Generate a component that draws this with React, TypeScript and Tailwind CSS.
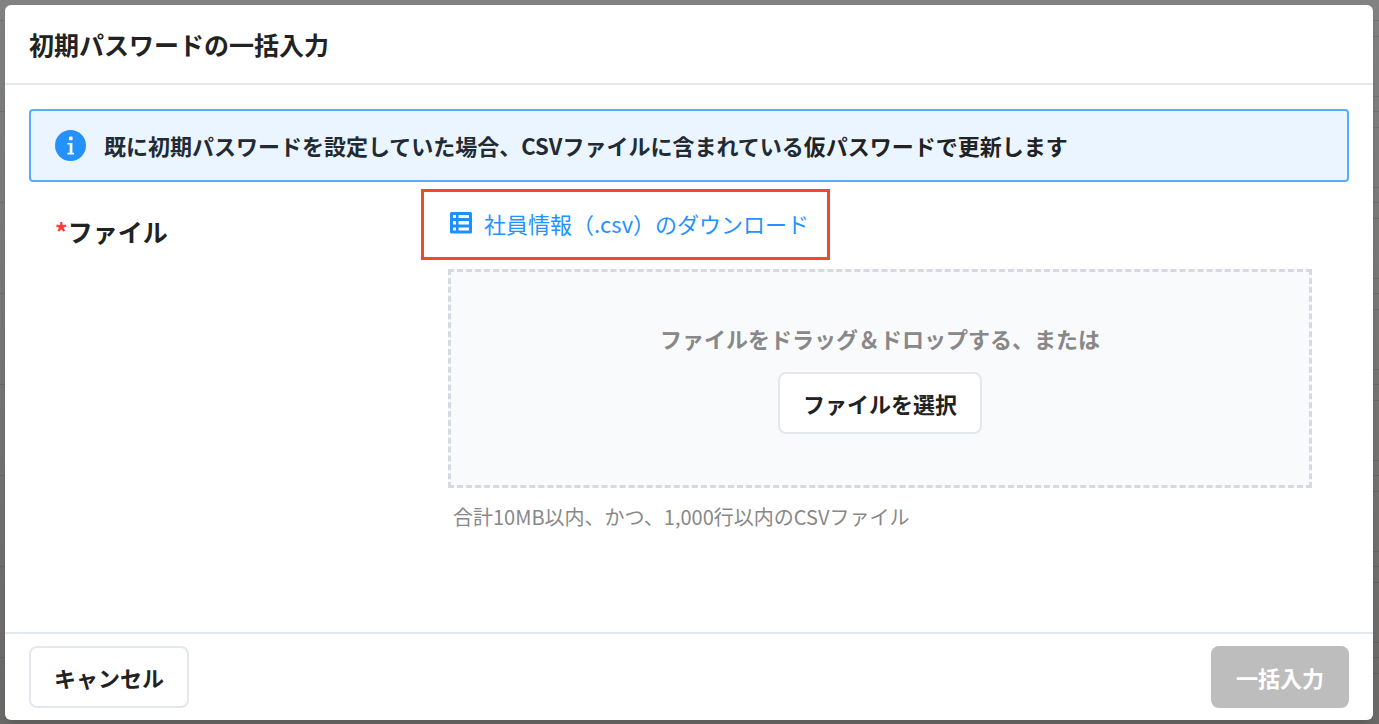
import React, { useRef } from 'react';

const listRows = [0, 1, 2, 3, 4, 5, 6, 7];

const InfoIcon = () => (
  <svg viewBox="0 0 31 31" className="h-[31px] w-[31px] shrink-0" aria-hidden="true">
    <circle cx="15.5" cy="15.5" r="15.5" fill="#2491ff" />
    <rect x="14" y="6.6" width="3.6" height="3.6" rx="0.8" fill="#fff" />
    <path d="M12.4 12.9H17.4V22.8H19V24.5H12.4V22.8H14.7V14.6H12.4Z" fill="#fff" />
  </svg>
);

const TableIcon = () => (
  <svg viewBox="0 0 22 22" className="h-[22px] w-[22px] shrink-0" aria-hidden="true">
    <path
      fillRule="evenodd"
      fill="#1f8fff"
      d="M1.5 0H20.5A1.5 1.5 0 0 1 22 1.5V20A1.5 1.5 0 0 1 20.5 21.5H1.5A1.5 1.5 0 0 1 0 20V1.5A1.5 1.5 0 0 1 1.5 0ZM3 3V6H6V3ZM8.5 3V6H19V3ZM3 9V12.5H6V9ZM8.5 9V12.5H19V9ZM3 15.5V18.5H6V15.5ZM8.5 15.5V18.5H19V15.5Z"
    />
  </svg>
);

const App = () => {
  const fileInput = useRef<HTMLInputElement>(null);

  return (
    <div className="relative flex min-h-screen bg-linear-to-b from-[#828282] to-[#6c6a69] pt-[5px] pr-[6px] pb-1 pl-[5px] font-['Noto_Sans_CJK_JP',sans-serif] text-[22px] leading-8 text-[#222]">
      {/* Dimmed list behind the dialog */}
      <div className="absolute inset-0 overflow-hidden pt-5" aria-hidden="true">
        {listRows.map(row => (
          <div key={row} className="flex h-[91px] justify-end border-t border-black/10">
            <div className="mt-[15px] h-[61px] w-8 border-y border-black/10" />
          </div>
        ))}
      </div>

      <div
        role="dialog"
        aria-labelledby="dialog-title"
        className="relative flex flex-1 flex-col rounded-md bg-white shadow-lg"
      >
        <header className="border-b-2 border-[#e3e8ed] px-6 pt-[23px] pb-[23px]">
          <h1 id="dialog-title" className="text-[25px] leading-8 font-bold">
            初期パスワードの一括入力
          </h1>
        </header>

        <main className="flex-1 px-6 pt-6">
          <div className="flex items-center gap-[18px] rounded border-2 border-[#58acff] bg-[#eaf5ff] px-6 pt-[18px] pb-[19px] font-bold text-[#222b33]">
            <InfoIcon />
            <p>
              既に初期パスワードを設定していた場合、CSVファイルに含まれている
              <span className="text-[#222]">仮パスワードで更新します</span>
            </p>
          </div>

          <div className="flex pt-[7px] pr-[37px] pl-[26px]">
            <label htmlFor="file" className="w-[366px] shrink-0 pt-[26px] text-[25px] font-bold">
              <span className="text-[#ff3b3b]">*</span>ファイル
            </label>

            <div className="flex-1">
              <a
                href="#download"
                className="flex w-fit items-center gap-3 border-[3px] border-[#f04a2a] pt-[15px] pr-[18px] pb-[18px] pl-[26px] text-[#2491ff]"
              >
                <TableIcon />
                社員情報（.csv）のダウンロード
              </a>

              <div className="mt-[9px] ml-[27px] flex flex-col items-center border-[3px] border-dashed border-[#d3dae1] bg-[#f9fafc] pt-[50px] pb-[51px]">
                <p className="font-bold text-[#888]">ファイルをドラッグ＆ドロップする、または</p>
                <input ref={fileInput} id="file" type="file" accept=".csv" className="hidden" />
                <button
                  type="button"
                  onClick={() => fileInput.current?.click()}
                  className="mt-[18px] rounded-lg border-2 border-[#e3e8ed] bg-white px-[23px] py-[13px] font-bold"
                >
                  ファイルを選択
                </button>
              </div>
              <p className="mt-[13px] ml-8 text-[20px] text-[#888]">
                合計10MB以内、かつ、1,000行以内のCSVファイル
              </p>
            </div>
          </div>
        </main>

        <footer className="flex items-center justify-between border-t-2 border-[#e3e8ed] px-6 py-3">
          <button type="button" className="rounded-lg border-2 border-[#e3e8ed] bg-white px-[23px] py-[13px] font-bold">
            キャンセル
          </button>
          <button type="button" disabled className="rounded-lg bg-[#bdbdbd] px-[25px] py-[15px] font-bold text-white">
            一括入力
          </button>
        </footer>
      </div>
    </div>
  );
};

export default App;
